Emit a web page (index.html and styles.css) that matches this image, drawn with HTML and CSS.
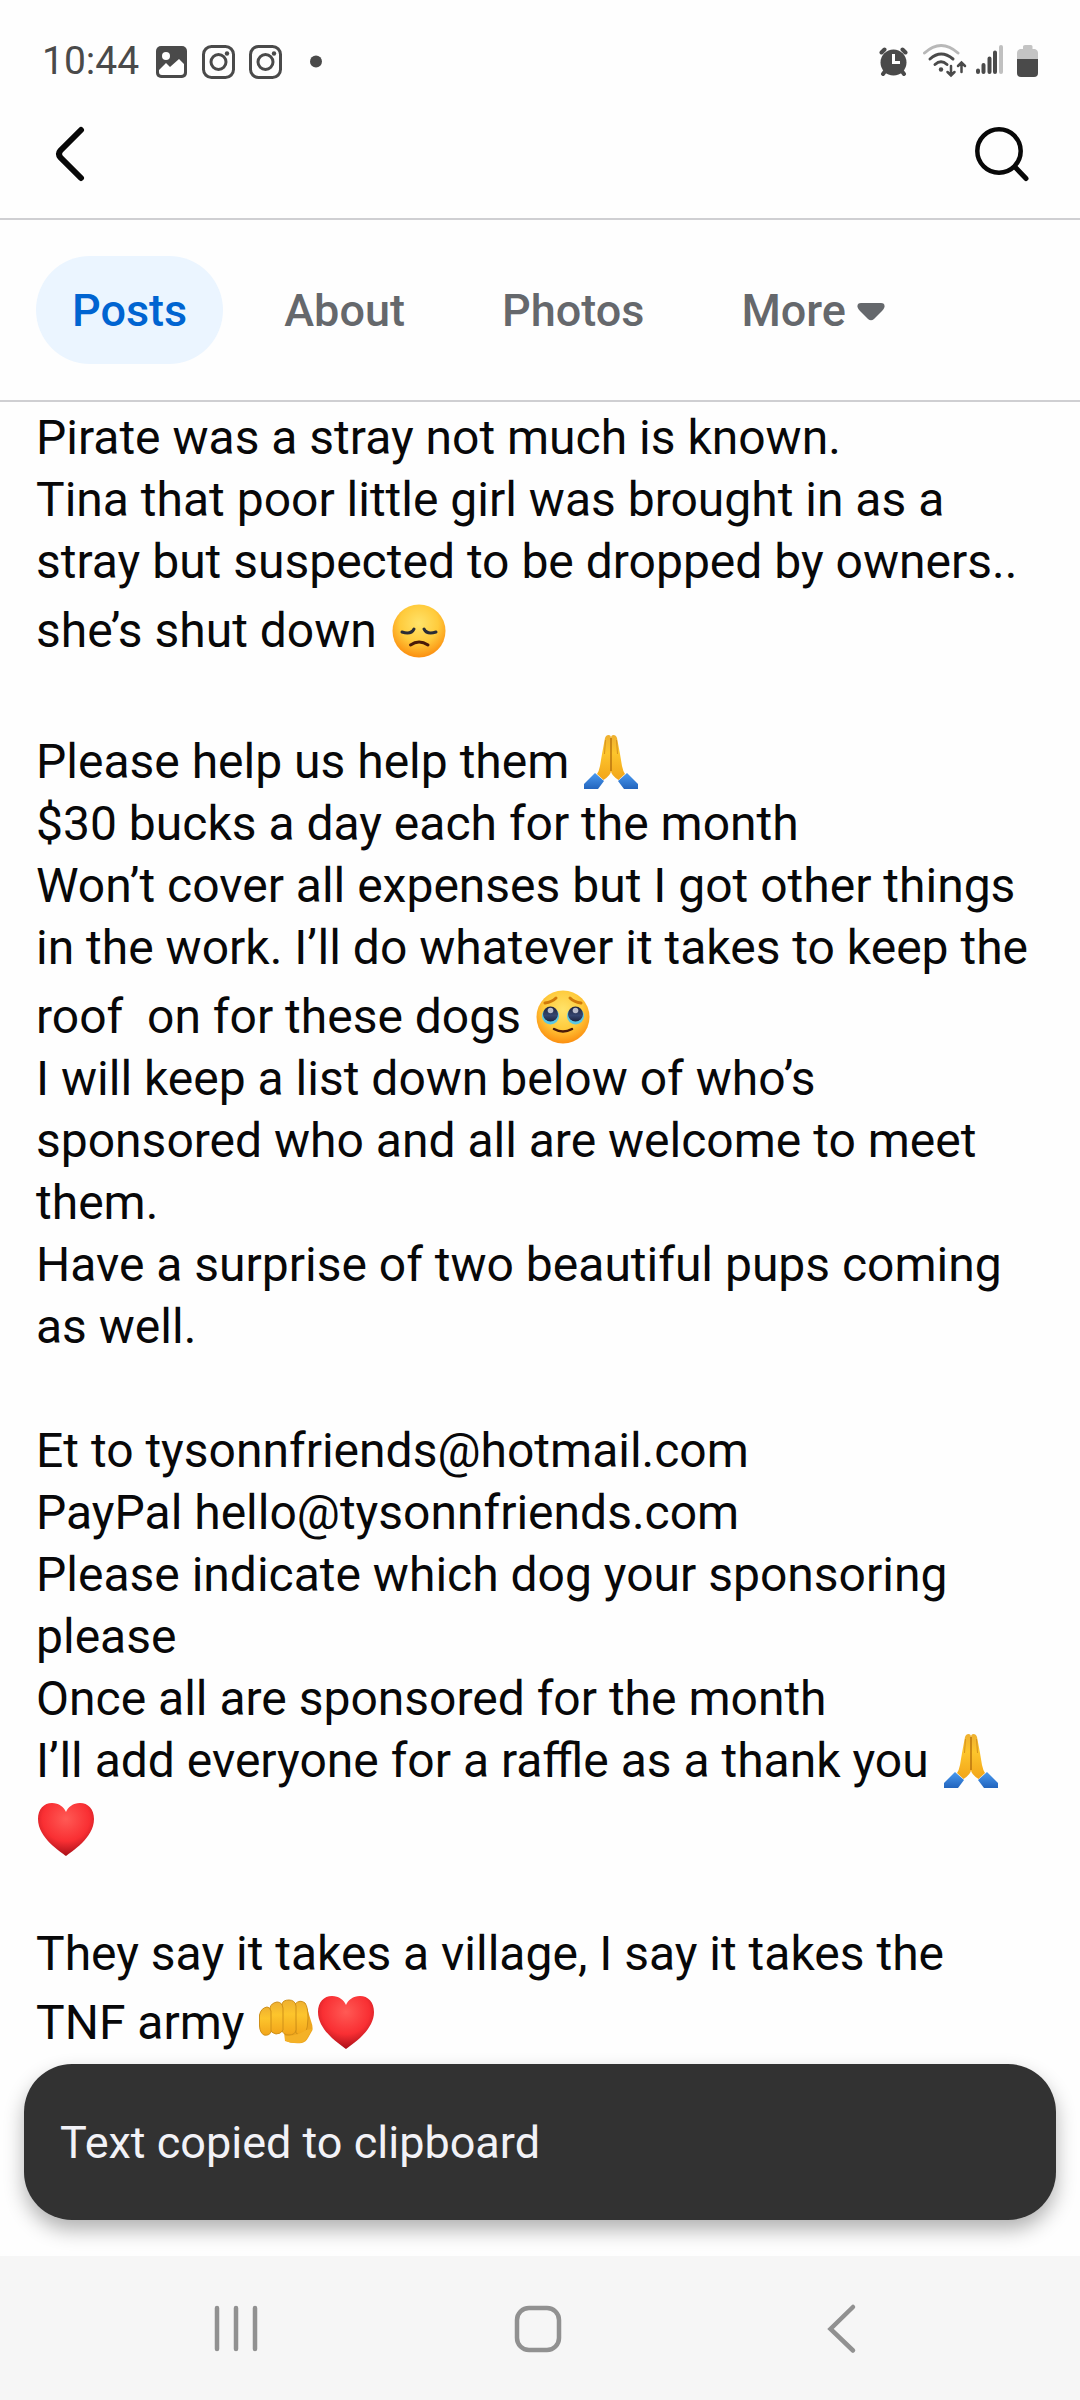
FILE: index.html
```
<!DOCTYPE html>
<html lang="en">
<head>
    <meta charset="UTF-8">
    <meta name="viewport" content="width=device-width, initial-scale=1.0">
    <title>Posts</title>
    <link rel="stylesheet" href="styles.css">
</head>
<body>
    <svg class="defs" width="0" height="0" aria-hidden="true">
        <defs>
            <radialGradient id="faceFill" cx="0.5" cy="0.36" r="0.66">
                <stop offset="0" stop-color="#ffe36a"/>
                <stop offset="0.55" stop-color="#ffcb3c"/>
                <stop offset="1" stop-color="#fb8a0c"/>
            </radialGradient>
            <radialGradient id="heartFill" cx="0.5" cy="0.3" r="0.7">
                <stop offset="0" stop-color="#ff5a55"/>
                <stop offset="0.6" stop-color="#f92f33"/>
                <stop offset="1" stop-color="#a80f18"/>
            </radialGradient>
            <linearGradient id="handFill" x1="0" y1="0" x2="0" y2="1">
                <stop offset="0" stop-color="#eeb030"/>
                <stop offset="0.4" stop-color="#fdc52c"/>
                <stop offset="1" stop-color="#f2a51a"/>
            </linearGradient>
            <linearGradient id="cuffFill" x1="0" y1="0" x2="0" y2="1">
                <stop offset="0" stop-color="#4a9af0"/>
                <stop offset="1" stop-color="#2264bd"/>
            </linearGradient>
            <linearGradient id="eyeFill" x1="0" y1="0" x2="0" y2="1">
                <stop offset="0" stop-color="#20243c"/>
                <stop offset="0.6" stop-color="#35456f"/>
                <stop offset="1" stop-color="#1c2340"/>
            </linearGradient>
            <symbol id="heart" viewBox="0 0 56 54">
                <path fill="url(#heartFill)" d="M28 53C23 49 0 35 0 16C0 6 6 0 14 0C21 0 26 4 28 9C30 4 35 0 42 0C50 0 56 6 56 16C56 35 33 49 28 53Z"/>
            </symbol>
            <symbol id="pray" viewBox="0 0 56 54">
                <path fill="url(#cuffFill)" d="M1 49L12 38L21 46L15 54H1Z"/>
                <path fill="url(#cuffFill)" d="M55 49L44 38L35 46L41 54H55Z"/>
                <path fill="url(#handFill)" d="M22 3Q23 0 25.500 0Q28 0 28 3V36Q28 40 20.500 45L14 39Q16 36 17 31L19 19Z"/>
                <path fill="url(#handFill)" d="M34 3Q33 0 30.500 0Q28 0 28 3V36Q28 40 35.500 45L42 39Q40 36 39 31L37 19Z"/>
                <path fill="none" stroke="#b8740f" stroke-width="1.500" d="M28 3V36"/>
                <path fill="none" stroke="#d8941c" d="M22.500 5L21.500 19M33.500 5L34.500 19"/>
            </symbol>
        </defs>
    </svg>

    <div class="status-bar">
        <span class="clock">10:44</span>
        <svg class="status-left" viewBox="0 0 168 36" aria-hidden="true">
            <rect x="0" y="3" width="31" height="32" rx="5" fill="#4a4a4a"/>
            <circle cx="10" cy="13" r="4" fill="#fff"/>
            <path fill="#fff" d="M3 27L10 20L14 24L23 16L28 21V29Q28 32 25 32H6Q3 32 3 29Z"/>
            <g fill="none" stroke="#4a4a4a" stroke-width="3">
                <rect x="47.500" y="3.500" width="30" height="31" rx="8"/>
                <circle cx="62.500" cy="19" r="7.500"/>
                <rect x="94.500" y="3.500" width="30" height="31" rx="8"/>
                <circle cx="109.500" cy="19" r="7.500"/>
            </g>
            <g fill="#4a4a4a">
                <circle cx="71" cy="10.500" r="2.200"/>
                <circle cx="118" cy="10.500" r="2.200"/>
                <circle cx="160" cy="18.500" r="6"/>
            </g>
        </svg>
        <svg class="status-right" viewBox="0 0 160 36" aria-hidden="true">
            <g fill="#4a4a4a" stroke="#4a4a4a" stroke-linecap="round">
                <circle cx="14.500" cy="19.500" r="13" stroke="none"/>
                <path stroke-width="4" d="M2.500 9.500L5.500 6.500M23.500 6.500L26.500 9.500M4 31L7 27M25 31L22 27"/>
            </g>
            <path fill="none" stroke="#fff" stroke-width="3" d="M14.500 11V19.500H21"/>
            <g fill="none" stroke="#4a4a4a" stroke-width="3" stroke-linecap="round">
                <path stroke="#b8b8b8" d="M45.500 10Q62 -5 79 10"/>
                <path d="M51 16Q62 6 74 16"/>
                <path d="M56 21.500Q62 16 68 21.500"/>
                <path stroke-width="2.500" d="M72 23V32M68.500 29L72 32.500L75.500 29M82.500 29V20M79 23L82.500 19.500L86 23"/>
                <path stroke-width="4" d="M99 27.500V29M104.500 22V29M110.500 15.500V29M116 9.500V29"/>
                <path stroke="#c0c0c0" stroke-width="4" d="M122 4V29"/>
            </g>
            <circle cx="62" cy="26.500" r="2.200" fill="#4a4a4a"/>
            <path fill="#c4c4c4" d="M144 3.500Q144 2 146 2H152Q153.500 2 153.500 3.500V6H156Q159 7 159 10V17H138V10Q138 7 141 6H144Z"/>
            <path fill="#4a4a4a" d="M138 16H159V30Q159 34 155 34H142Q138 34 138 30Z"/>
        </svg>
    </div>

    <header class="top-bar">
        <button class="icon-button" aria-label="Back">
            <svg width="60" height="60" viewBox="0 0 60 60">
                <path fill="none" stroke="#080808" stroke-width="6" stroke-linecap="round" d="M45 8L24.500 28.500Q21.500 32 24.500 35.500L45 56"/>
            </svg>
        </button>
        <button class="icon-button" aria-label="Search">
            <svg width="60" height="60" viewBox="0 0 60 60">
                <g fill="none" stroke="#080808" stroke-linecap="round">
                    <circle cx="27" cy="29" r="21.700" stroke-width="4.500"/>
                    <path stroke-width="5" d="M43 45L54 56.500"/>
                </g>
            </svg>
        </button>
    </header>

    <nav class="tabs">
        <button class="tab active">Posts</button>
        <button class="tab">About</button>
        <button class="tab">Photos</button>
        <button class="tab">More
            <svg class="caret" width="28" height="18" viewBox="0 0 28 18" aria-hidden="true">
                <path fill="#65686c" d="M4 0H24Q28 0 27.500 4Q27 6 25 8L17 16Q14 18.500 11 16L3 8Q1 6 .5 4Q0 0 4 0Z"/>
            </svg>
        </button>
    </nav>

    <main class="post">
        <p>
            Pirate was a stray not much is known.<br>
            Tina that poor little girl was brought in as a stray but suspected to be dropped by owners.. she’s shut down
            <svg class="emoji" viewBox="0 0 56 54" role="img" aria-label="disappointed face">
                <circle cx="28" cy="27" r="26.500" fill="url(#faceFill)"/>
                <g fill="none" stroke="#2b2d35" stroke-width="3" stroke-linecap="round">
                    <path d="M11 28Q20 31 23 25M45 28Q36 31 33 25"/>
                    <path stroke="#4a1a08" d="M19.500 41Q28 35 37 41"/>
                </g>
            </svg>
        </p>
        <p>
            Please help us help them
            <svg class="emoji" role="img" aria-label="folded hands"><use href="#pray"/></svg><br>
            $30 bucks a day each for the month<br>
            Won’t cover all expenses but I got other things in the work. I’ll do whatever it takes to keep the roof&nbsp; on for these dogs
            <svg class="emoji" viewBox="0 0 56 54" role="img" aria-label="face holding back tears">
                <circle cx="28" cy="27" r="26.500" fill="url(#faceFill)"/>
                <g fill="none" stroke="#d07a0a" stroke-width="3" stroke-linecap="round">
                    <path d="M10 13Q17 12 21 8M46 13Q39 12 35 8"/>
                    <path stroke="#4a1a08" stroke-width="2.500" d="M19 39Q28 44 37 39"/>
                </g>
                <g fill="#5cc8e4">
                    <circle cx="15.500" cy="26" r="8.500"/>
                    <circle cx="40.500" cy="26" r="8.500"/>
                </g>
                <g fill="url(#eyeFill)">
                    <circle cx="15.500" cy="24" r="7.500"/>
                    <circle cx="40.500" cy="24" r="7.500"/>
                </g>
                <g fill="#b8bccb">
                    <circle cx="15.500" cy="20.500" r="2.800"/>
                    <circle cx="40.500" cy="20.500" r="2.800"/>
                </g>
            </svg><br>
            I will keep a list down below of who’s sponsored who and all are welcome to meet them.<br>
            Have a surprise of two beautiful pups coming as well.
        </p>
        <p>
            Et to tysonnfriends@hotmail.com<br>
            PayPal hello@tysonnfriends.com<br>
            Please indicate which dog your sponsoring please<br>
            Once all are sponsored for the month<br>
            I’ll add everyone for a raffle as a thank you
            <svg class="emoji tight" role="img" aria-label="folded hands"><use href="#pray"/></svg>
            <svg class="emoji" role="img" aria-label="red heart"><use href="#heart"/></svg>
        </p>
        <p>
            They say it takes a village, I say it takes the TNF army
            <svg class="emoji" viewBox="0 0 56 54" role="img" aria-label="oncoming fist">
                <path fill="#eda61f" d="M26 36L27 45Q34 48 44 47Q48 46 50 42L54.500 34Q55 30 53 25L49 12Z"/>
                <g fill="url(#handFill)" stroke="#cf9018">
                    <path d="M37 8Q42 3 47 7Q50 11 50 22Q50 32 47 38Q43 41 38 37Z"/>
                    <path d="M24 8Q25 4 31 4Q37 4 38 10V34Q37 39 31 39Q25 39 24 34Z"/>
                    <path d="M12 12Q13 7 19 6Q24 6 25 12V34Q23 38 18 38Q13 37 12 33Z"/>
                    <path d="M1.500 19Q3 12 9 11Q12 11 13 15V36Q11 40 6 39Q2 37 1.500 30Z"/>
                </g>
                <path fill="#f4b127" d="M27 40Q40 40 48 34L54 33L49 42Q46 47 39 47Q30 47 27 44Z"/>
            </svg><svg class="emoji" role="img" aria-label="red heart"><use href="#heart"/></svg>
        </p>
        <div class="toast" role="status">Text copied to clipboard</div>
    </main>

    <footer class="nav-bar">
        <button class="icon-button" aria-label="Recent apps">
            <svg width="60" height="60" viewBox="0 0 60 60">
                <path fill="none" stroke="#919191" stroke-width="4.500" stroke-linecap="round" d="M12 10V51M31 10V51M50 10V51"/>
            </svg>
        </button>
        <button class="icon-button" aria-label="Home">
            <svg width="60" height="60" viewBox="0 0 60 60">
                <rect x="9" y="10" width="42" height="42" rx="12" fill="none" stroke="#919191" stroke-width="4.500"/>
            </svg>
        </button>
        <button class="icon-button" aria-label="Back">
            <svg width="60" height="60" viewBox="0 0 60 60">
                <path fill="none" stroke="#919191" stroke-width="4.500" stroke-linecap="round" d="M42 9L19.500 31L42 52.500"/>
            </svg>
        </button>
    </footer>
</body>
</html>
```
FILE: styles.css
```
* {
    box-sizing: border-box;
}

body {
    display: flex;
    flex-direction: column;
    margin: 0;
    min-height: 100vh;
    background-color: #fefefe;
    color: #080809;
    font-family: Roboto, "Liberation Sans", sans-serif;
}

button {
    border: none;
    background: none;
    padding: 0;
    color: inherit;
    font-family: inherit;
    cursor: pointer;
}

svg {
    display: block;
}

.defs {
    position: absolute;
}

.status-bar {
    display: flex;
    align-items: center;
    padding: 36px 41px 0 42px;
    height: 86px;
    color: #4a4a4a;
    font-size: 39px;
}

.status-left {
    width: 168px;
    height: 36px;
    margin-left: 17px;
}

.status-right {
    width: 160px;
    height: 36px;
    margin-left: auto;
}

.top-bar {
    display: flex;
    justify-content: space-between;
    padding: 36px 48px 36px 36px;
    border-bottom: 2px solid #cfcfd2;
}

.icon-button {
    width: 60px;
    height: 60px;
}

.tabs {
    display: flex;
    gap: 25px;
    padding: 36px;
    border-bottom: 2px solid #cfcfd2;
}

.tab {
    display: flex;
    align-items: center;
    gap: 11px;
    height: 108px;
    padding: 0 36px;
    border-radius: 54px;
    color: #65686c;
    font-size: 45px;
    font-weight: 500;
}

.tab.active {
    background-color: #ebf5ff;
    color: #0064d1;
}

.caret {
    margin-top: 4px;
}

.post {
    position: relative;
    flex: 1;
    padding: 5px 36px 0;
    font-size: 48px;
    line-height: 62px;
}

.post p {
    margin: 0 0 62px;
}

.post p:last-of-type {
    margin-bottom: 0;
}

.emoji {
    display: inline-block;
    width: 56px;
    height: 54px;
    margin: 11px 2px 0;
    vertical-align: -11px;
}

.emoji.tight {
    margin-top: 0;
}

.toast {
    position: absolute;
    left: 24px;
    right: 24px;
    bottom: 36px;
    padding: 48px 36px 46px;
    border-radius: 48px;
    background-color: #323232;
    color: #f2f2f7;
    font-size: 45px;
    box-shadow: 0 10px 20px rgba(0, 0, 0, 0.3);
}

.nav-bar {
    display: flex;
    justify-content: space-around;
    align-items: center;
    height: 144px;
    padding: 0 88px 0 84px;
    background-color: #f6f6f6;
}
```
